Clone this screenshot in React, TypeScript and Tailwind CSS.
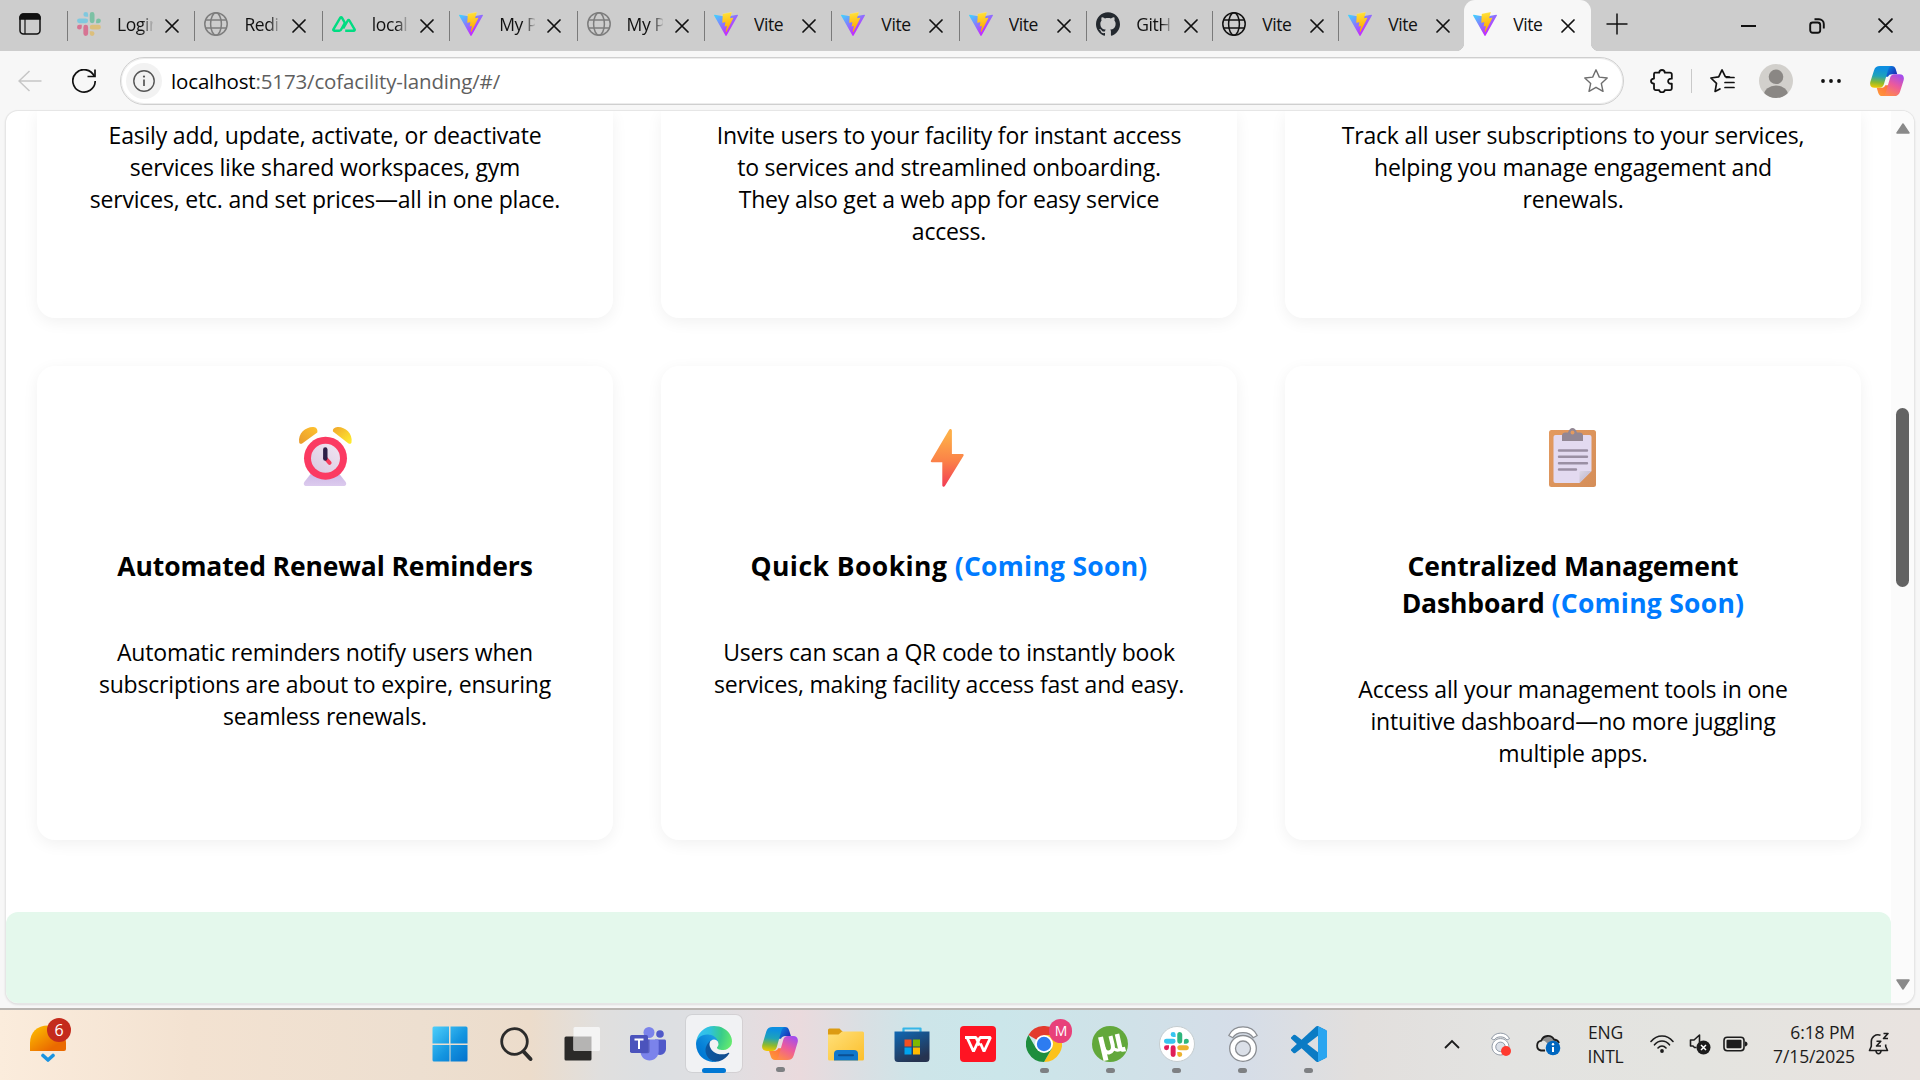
import React, { type ReactNode } from "react";

/* ---------- Favicons and brand marks ---------- */

function ViteMark() {
  return (
    <svg viewBox="0 0 256 257" className="h-6 w-6" preserveAspectRatio="none">
      <defs>
        <linearGradient id="viteA" x1="-.8%" x2="57.6%" y1="7.6%" y2="78.4%">
          <stop offset="0%" stopColor="#41D1FF" />
          <stop offset="100%" stopColor="#BD34FE" />
        </linearGradient>
        <linearGradient id="viteB" x1="43.4%" x2="50.3%" y1="2.2%" y2="89%">
          <stop offset="0%" stopColor="#FFEA83" />
          <stop offset="8.3%" stopColor="#FFDD35" />
          <stop offset="100%" stopColor="#FFA800" />
        </linearGradient>
      </defs>
      <path fill="url(#viteA)" d="M255.153 37.938L134.897 252.976c-2.483 4.44-8.862 4.466-11.382.048L.875 37.958c-2.746-4.814 1.371-10.646 6.827-9.67l120.385 21.517a6.537 6.537 0 0 0 2.322-.004l117.867-21.483c5.438-.991 9.574 4.796 6.877 9.62Z" />
      <path fill="url(#viteB)" d="M185.432.063L96.44 17.501a3.268 3.268 0 0 0-2.634 3.014l-5.474 92.456a3.268 3.268 0 0 0 3.997 3.378l24.777-5.718c2.318-.535 4.413 1.507 3.936 3.838l-7.361 36.047c-.495 2.426 1.782 4.5 4.151 3.78l15.304-4.649c2.372-.72 4.652 1.36 4.15 3.788l-11.698 56.621c-.732 3.542 3.979 5.473 5.943 2.437l1.313-2.028l72.516-144.72c1.215-2.423-.88-5.186-3.54-4.672l-25.505 4.922c-2.396.462-4.435-1.77-3.759-4.114l16.646-57.705c.677-2.35-1.37-4.583-3.769-4.113Z" />
    </svg>
  );
}

function SlackMark({ className }: { className: string }) {
  return (
    <svg viewBox="0 0 54 54" className={className}>
      <path fill="#36C5F0" d="M19.712.133a5.381 5.381 0 0 0-5.376 5.387 5.381 5.381 0 0 0 5.376 5.386h5.376V5.52A5.381 5.381 0 0 0 19.712.133m0 14.365H5.376A5.381 5.381 0 0 0 0 19.884a5.381 5.381 0 0 0 5.376 5.387h14.336a5.381 5.381 0 0 0 5.376-5.387 5.381 5.381 0 0 0-5.376-5.386" />
      <path fill="#2EB67D" d="M53.76 19.884a5.381 5.381 0 0 0-5.376-5.386 5.381 5.381 0 0 0-5.376 5.386v5.387h5.376a5.381 5.381 0 0 0 5.376-5.387m-14.336 0V5.52A5.381 5.381 0 0 0 34.048.133a5.381 5.381 0 0 0-5.376 5.387v14.364a5.381 5.381 0 0 0 5.376 5.387 5.381 5.381 0 0 0 5.376-5.387" />
      <path fill="#ECB22E" d="M34.048 54a5.381 5.381 0 0 0 5.376-5.387 5.381 5.381 0 0 0-5.376-5.386h-5.376v5.386A5.381 5.381 0 0 0 34.048 54m0-14.365h14.336a5.381 5.381 0 0 0 5.376-5.386 5.381 5.381 0 0 0-5.376-5.387H34.048a5.381 5.381 0 0 0-5.376 5.387 5.381 5.381 0 0 0 5.376 5.386" />
      <path fill="#E01E5A" d="M0 34.249a5.381 5.381 0 0 0 5.376 5.386 5.381 5.381 0 0 0 5.376-5.386v-5.387H5.376A5.381 5.381 0 0 0 0 34.25m14.336-.001v14.364A5.381 5.381 0 0 0 19.712 54a5.381 5.381 0 0 0 5.376-5.387V34.25a5.381 5.381 0 0 0-5.376-5.387 5.381 5.381 0 0 0-5.376 5.387" />
    </svg>
  );
}

function GlobeMark({ color }: { color: string }) {
  return (
    <svg viewBox="0 0 24 24" className="h-6 w-6" fill="none" stroke={color} strokeWidth="1.5">
      <circle cx="12" cy="12" r="11.2" />
      <ellipse cx="12" cy="12" rx="5.4" ry="11.2" />
      <path d="M1.8 8h20.4M1.8 16h20.4" />
    </svg>
  );
}

function NuxtMark() {
  return (
    <svg viewBox="0 0 24 24" className="h-6 w-6" fill="none" stroke="#00DC82" strokeWidth="2.4" strokeLinejoin="round">
      <path d="M7.4 18.8H2.2c-.8 0-1.2-.8-.8-1.5L8.3 5.6c.4-.7 1.200-.7 1.600 0l3 5.200-3.200 5.700c-.6 1.500-1.200 2.300-2.300 2.300z" />
      <path d="M13.2 18.8h8.500c.8 0 1.300-.8.9-1.500l-5.200-8.800c-.4-.7-1.200-.7-1.600 0l-4.600 8" />
    </svg>
  );
}

function GithubMark() {
  return (
    <svg viewBox="0 0 24 24" className="h-6 w-6" fill="#24292f">
      <path d="M12 .297c-6.63 0-12 5.373-12 12 0 5.303 3.438 9.8 8.205 11.385.6.113.82-.258.82-.577 0-.285-.01-1.04-.015-2.04-3.338.724-4.042-1.61-4.042-1.61C4.422 18.07 3.633 17.7 3.633 17.7c-1.087-.744.084-.729.084-.729 1.205.084 1.838 1.236 1.838 1.236 1.07 1.835 2.809 1.305 3.495.998.108-.776.417-1.305.76-1.605-2.665-.3-5.466-1.332-5.466-5.93 0-1.31.465-2.38 1.235-3.22-.135-.303-.54-1.523.105-3.176 0 0 1.005-.322 3.3 1.23.96-.267 1.98-.399 3-.405 1.02.006 2.04.138 3 .405 2.28-1.552 3.285-1.23 3.285-1.23.645 1.653.24 2.873.12 3.176.765.84 1.23 1.91 1.23 3.22 0 4.61-2.805 5.625-5.475 5.92.42.36.81 1.096.81 2.22 0 1.606-.015 2.896-.015 3.286 0 .315.21.69.825.57C20.565 22.092 24 17.592 24 12.297c0-6.627-5.373-12-12-12" />
    </svg>
  );
}

function CopilotMark({ className }: { className: string }) {
  return (
    <svg viewBox="0 0 36 32" className={className} preserveAspectRatio="none">
      <defs>
        <linearGradient id="cpA" x1="0.3" y1="0" x2="0.2" y2="1">
          <stop offset="0.1" stopColor="#0d8fe0" />
          <stop offset="0.45" stopColor="#1fa3b8" />
          <stop offset="0.75" stopColor="#8cb92f" />
          <stop offset="1" stopColor="#f5c800" />
        </linearGradient>
        <linearGradient id="cpB" x1="0.8" y1="0" x2="0.3" y2="1">
          <stop offset="0" stopColor="#a14cf0" />
          <stop offset="0.5" stopColor="#ec5a9c" />
          <stop offset="1" stopColor="#ff8a4a" />
        </linearGradient>
        <linearGradient id="cpC" x1="0" y1="0" x2="1" y2="0.600">
          <stop offset="0.3" stopColor="#0a7fe0" />
          <stop offset="1" stopColor="#1a2fb5" />
        </linearGradient>
        <linearGradient id="cpD" x1="1" y1="0" x2="0" y2="1">
          <stop offset="0" stopColor="#ff6a3c" />
          <stop offset="1" stopColor="#ff9c3a" />
        </linearGradient>
      </defs>
      <path fill="url(#cpC)" d="M14 0h9c2.300 0 3.500 1.100 4.200 3.300l1.700 5.500h-5.400c-2.200 0-3.600.8-4.500 2.700H14z" />
      <path fill="url(#cpD)" d="M22 32h-9c-2.300 0-3.500-1.100-4.200-3.300l-1.700-5.500h4.600c2.200 0 3.600-.8 4.500-2.700H22z" />
      <path fill="url(#cpA)" d="M10.500 0H23c-2 .2-3 1.500-3.700 3.800l-4.500 15.500c-.7 2.500-2.200 3.900-4.700 3.900H4.800C1 23.200-.6 20.500.4 16.900L4.300 4.400C5.200 1.400 7.300 0 10.500 0z" />
      <path fill="url(#cpB)" d="M25.500 32H13c2-.2 3-1.500 3.700-3.800l4.500-15.500c.7-2.500 2.200-3.900 4.700-3.900h5.300c3.800 0 5.400 2.700 4.400 6.300l-3.900 12.500c-.9 3-3 4.400-6.200 4.400z" />
    </svg>
  );
}

/* ---------- Browser tabs ---------- */

type TabInfo = { icon: ReactNode; title: string; cut?: boolean };

const tabs: TabInfo[] = [
  { icon: <SlackMark className="h-6 w-6 opacity-50" />, title: "Login", cut: true },
  { icon: <GlobeMark color="#7d7d7d" />, title: "Redir", cut: true },
  { icon: <NuxtMark />, title: "localh", cut: true },
  { icon: <ViteMark />, title: "My Pr", cut: true },
  { icon: <GlobeMark color="#7d7d7d" />, title: "My Pr", cut: true },
  { icon: <ViteMark />, title: "Vite" },
  { icon: <ViteMark />, title: "Vite" },
  { icon: <ViteMark />, title: "Vite" },
  { icon: <GithubMark />, title: "GitHu", cut: true },
  { icon: <GlobeMark color="#111" />, title: "Vite" },
  { icon: <ViteMark />, title: "Vite" },
];

function Cross({ className }: { className: string }) {
  return (
    <svg viewBox="0 0 14 14" className={className} stroke="#111" strokeWidth="1.7" strokeLinecap="round">
      <path d="M1 1l12 12M13 1L1 13" />
    </svg>
  );
}

function TabBody({ icon, title, cut }: TabInfo) {
  return (
    <>
      {icon}
      <span
        className={
          "ml-4 block w-[36px] overflow-hidden whitespace-nowrap text-[17.5px] leading-6 tracking-[-0.4px] text-[#111]" +
          (cut ? " [mask-image:linear-gradient(to_right,#000_25px,transparent_37px)]" : "")
        }
      >
        {title}
      </span>
      <Cross className="ml-3 mt-[3px] h-[14px] w-[14px]" />
    </>
  );
}

function TabStrip() {
  return (
    <div className="flex h-[51px] shrink-0 bg-[#cdcdcd]">
      <div className="flex w-[67px] items-center pb-[3px] pl-[19px]">
        <svg viewBox="0 0 22 22" className="h-[22px] w-[22px]" fill="none" stroke="#111" strokeWidth="1.5">
          <rect x="1" y="1" width="20" height="20" rx="3.5" />
          <path d="M1 4.500a3.500 3.500 0 0 1 3.500-3.500h13a3.500 3.500 0 0 1 3.500 3.500V6H1z" fill="#111" />
          <path d="M6 6v15" strokeWidth="1.2" />
        </svg>
      </div>
      {tabs.map((tab, i) => (
        <div key={i} className={"flex shrink-0 items-center pb-[3px] " + (i < 8 ? "w-[127.4px]" : "w-[126px]")}>
          <div className="mr-[9px] mt-[4px] h-[30px] w-px bg-[#7a7a7a]" />
          <TabBody {...tab} />
        </div>
      ))}
      <div className="-ml-2 flex items-end">
        <div className="h-2 w-2 bg-[radial-gradient(circle_at_0_0,#cdcdcd_8px,#f7f7f7_8.500px)]" />
        <div className="flex h-[51px] w-[127px] items-center rounded-t-[11px] bg-[#f7f7f7] pb-[3px] pl-[9px]">
          <TabBody icon={<ViteMark />} title="Vite" />
        </div>
        <div className="h-2 w-2 bg-[radial-gradient(circle_at_100%_0,#cdcdcd_8px,#f7f7f7_8.500px)]" />
      </div>
      <div className="flex flex-1 items-center pb-1 pl-[7px]">
        <svg viewBox="0 0 22 22" className="h-[22px] w-[22px]" stroke="#111" strokeWidth="1.5">
          <path d="M11 .5v21M.5 11h21" />
        </svg>
      </div>
      <div className="flex items-center gap-[53px] pr-[27px]">
        <div className="h-[2px] w-[15px] bg-[#111]" />
        <svg viewBox="0 0 16 16" className="h-4 w-4" fill="none" stroke="#111" strokeWidth="1.9">
          <rect x="1.200" y="4.500" width="10" height="10.300" rx="2.500" />
          <path d="M5.500 1.200H10a4.800 4.800 0 0 1 4.800 4.800v4.500" />
        </svg>
        <Cross className="h-[15px] w-[15px]" />
      </div>
    </div>
  );
}

/* ---------- Address row ---------- */

function AddressRow() {
  return (
    <div className="flex h-[60px] shrink-0 items-center bg-[#f7f7f7] pl-[18px]">
      <svg viewBox="0 0 24 22" className="h-[22px] w-6" fill="none" stroke="#c6c6c6" strokeWidth="1.5">
        <path d="M23.500 11H1M11.500 1L1 11l10.500 10" />
      </svg>
      <svg viewBox="0 0 24 24" className="ml-[30px] h-6 w-6" fill="none" stroke="#111" strokeWidth="1.7">
        <path d="M22.200 7.200A11.200 11.200 0 1 0 23.200 12" />
        <path d="M23 .5v7h-7.500" />
      </svg>
      <div className="ml-6 flex h-[48px] w-[1504px] items-center rounded-full border border-[#cfcfcf] bg-white pl-[5px] pr-[15px] shadow-[inset_0_0_0_1px_#ececec]">
        <div className="flex h-9 w-9 items-center justify-center rounded-full bg-[#f2f2f2]">
          <svg viewBox="0 0 22 22" className="h-[22px] w-[22px]" fill="none" stroke="#555" strokeWidth="1.400">
            <circle cx="11" cy="11" r="10.200" />
            <path d="M11 9.500v6.500" strokeWidth="1.700" />
            <circle cx="11" cy="6.600" r="1.100" fill="#555" stroke="none" />
          </svg>
        </div>
        <span className="ml-[9px] flex-1 text-[20.5px] leading-7 tracking-[-0.15px] text-[#5f5f5f]">
          <span className="text-black">localhost</span>:5173/cofacility-landing/#/
        </span>
        <svg viewBox="0 0 24 24" className="h-6 w-6" fill="none" stroke="#6e6e6e" strokeWidth="1.400" strokeLinejoin="round">
          <path d="M12 .8l3.300 7.300 7.900.9-5.900 5.400 1.700 7.900L12 18.300 5 22.300l1.700-7.900L.8 9l7.900-.9z" />
        </svg>
      </div>
      <svg viewBox="0 0 24 24" className="ml-[26px] h-6 w-6" fill="none" stroke="#111" strokeWidth="1.800" strokeLinejoin="round">
        <path d="M5 3.700h4.200C9.300 1.900 10.600 1 12 1s2.700.9 2.800 2.700H20a1.800 1.800 0 0 1 1.800 1.800v4.200c-2.300-.3-3.700.9-3.700 2.500s1.400 2.800 3.700 2.500v4.600a1.800 1.800 0 0 1-1.800 1.800h-5.200C14.700 22.500 13.400 23.300 12 23.300s-2.700-.8-2.800-2.200H5.800A1.800 1.800 0 0 1 4 19.300v-4.600C2.200 14.600 1 13.500 1 12.100S2.200 9.700 4 9.600V5a1.300 1.300 0 0 1 1-1.300z" />
      </svg>
      <div className="ml-[17px] h-6 w-px bg-[#c9c9c9]" />
      <svg viewBox="0 0 25 24" className="ml-[18px] h-6 w-[25px]" fill="none" stroke="#111" strokeWidth="1.700" strokeLinejoin="round" strokeLinecap="round">
        <path d="M19.500 8.200L15.300 7.700 12 .9 8.700 7.900.9 9l5.600 5.400-1.400 8 4.800-2.500" />
        <path d="M16.500 8.500H24M15 13.500h9M15 18.500h9" />
      </svg>
      <svg viewBox="0 0 34 34" className="ml-[24px] h-[34px] w-[34px]">
        <clipPath id="avatarClip"><circle cx="17" cy="17" r="17" /></clipPath>
        <circle cx="17" cy="17" r="17" fill="#d2d0cc" />
        <circle cx="17" cy="12.800" r="7.300" fill="#8a8784" />
        <ellipse cx="17" cy="31" rx="12" ry="9.500" fill="#8a8784" clipPath="url(#avatarClip)" />
      </svg>
      <svg viewBox="0 0 22 6" className="ml-[27px] h-[6px] w-[22px]" fill="#111">
        <circle cx="3" cy="3" r="1.900" />
        <circle cx="11" cy="3" r="1.900" />
        <circle cx="19" cy="3" r="1.900" />
      </svg>
      <CopilotMark className="ml-[28px] h-[30px] w-[34px]" />
    </div>
  );
}

/* ---------- Feature cards ---------- */

function AlarmClock() {
  return (
    <svg viewBox="0 0 64 64" className="h-16 w-16">
      <defs>
        <linearGradient id="bellL" x1="0" y1="1" x2="1" y2="0">
          <stop offset="0" stopColor="#e89a2e" />
          <stop offset="1" stopColor="#ffc32e" />
        </linearGradient>
        <linearGradient id="bellR" x1="0" y1="0" x2="1" y2="1">
          <stop offset="0" stopColor="#f0a52c" />
          <stop offset="1" stopColor="#fff02e" />
        </linearGradient>
        <linearGradient id="clockBase" x1="0" y1="0" x2="0" y2="1">
          <stop offset="0" stopColor="#cdb8e6" />
          <stop offset="1" stopColor="#dccbee" />
        </linearGradient>
        <linearGradient id="clockFace" x1="1" y1="0" x2="0.2" y2="1">
          <stop offset="0" stopColor="#f0e6f2" />
          <stop offset="1" stopColor="#dccbe2" />
        </linearGradient>
      </defs>
      <path fill="url(#clockBase)" d="M18 48.500h28l6.500 8.200c1.500 2 .5 4.300-2 4.300h-37c-2.500 0-3.500-2.300-2-4.300z" />
      <circle cx="32.500" cy="33.200" r="21.500" fill="#fb3a62" />
      <circle cx="32.500" cy="33.200" r="14.500" fill="url(#clockFace)" />
      <path d="M32.300 33l4.300 4.800" stroke="#f83c5c" strokeWidth="4" strokeLinecap="round" />
      <path d="M32.300 24.500v9" stroke="#2e1f47" strokeWidth="4.400" strokeLinecap="round" />
      <path fill="url(#bellL)" d="M6.200 17.500C4.700 8 13.200 1.500 20.500 2c2.800.3 4.500 2.500 3.800 5.500L9.500 18.200c-1.300 1-3 .8-3.300-.7z" />
      <path fill="url(#bellR)" d="M58.500 17.500C60 8 51.500 1.500 44.500 2c-3 .3-5.200 2-4.500 4.500l15.200 11.700c1.300 1 3 .8 3.300-.7z" />
    </svg>
  );
}

function Bolt() {
  return (
    <svg viewBox="0 0 64 64" className="h-16 w-16">
      <defs>
        <linearGradient id="boltFill" x1="0.4" y1="0" x2="0.4" y2="1">
          <stop offset="0.1" stopColor="#fdae48" />
          <stop offset="0.55" stopColor="#fb8248" />
          <stop offset="1" stopColor="#f23c55" />
        </linearGradient>
      </defs>
      <path fill="url(#boltFill)" d="M32 5c.9-1.500 2.900-1 2.900.8V29h10.700c1 0 1.400.9.9 1.700L27.900 61c-.8 1.300-2.600.9-2.600-.7V37.200H14.900c-1 0-1.400-.8-.9-1.700z" />
    </svg>
  );
}

function Clipboard() {
  return (
    <svg viewBox="0 0 64 64" className="h-16 w-16">
      <defs>
        <linearGradient id="boardFill" x1="0" y1="0" x2="1" y2="1">
          <stop offset="0" stopColor="#e39a5f" />
          <stop offset="1" stopColor="#d58e59" />
        </linearGradient>
        <linearGradient id="foldFill" x1="0" y1="0" x2="1" y2="1">
          <stop offset="0" stopColor="#dcd7e6" />
          <stop offset="1" stopColor="#b5adc4" />
        </linearGradient>
      </defs>
      <rect x="8" y="5" width="47" height="57" rx="2.500" fill="url(#boardFill)" />
      <path fill="#e3daf0" d="M14.500 10h34a2 2 0 0 1 2 2v34L38.500 58h-24a2 2 0 0 1-2-2V12a2 2 0 0 1 2-2z" />
      <path fill="url(#foldFill)" d="M50.500 46l-12 12V47.500c0-.9.600-1.500 1.500-1.500z" />
      <path fill="#928794" d="M21 16V10.500c0-2 1.500-3 3.500-3H27C28 4.500 29.500 3 31.500 3s3.500 1.500 4.500 4.500h2.500c2 0 3.500 1 3.500 3V16z" />
      <circle cx="31.500" cy="7.500" r="1.900" fill="#e39a5f" />
      <path stroke="#9a8fa3" strokeWidth="2.400" strokeLinecap="round" d="M18 25.500h28M18 31.700h28M18 38.200h28M18 44.500h17" />
    </svg>
  );
}

function Lines({ lines }: { lines: string[] }) {
  return (
    <p className="text-[23px] leading-8 tracking-[-0.19px] text-black">
      {lines.map((l) => (
        <span key={l} className="block whitespace-nowrap">{l}</span>
      ))}
    </p>
  );
}

const cardClass = "flex flex-col items-center bg-white text-center shadow-[0_4px_16px_rgba(0,0,0,0.06)]";

const topCards: string[][] = [
  ["Easily add, update, activate, or deactivate", "services like shared workspaces, gym", "services, etc. and set prices—all in one place."],
  ["Invite users to your facility for instant access", "to services and streamlined onboarding.", "They also get a web app for easy service", "access."],
  ["Track all user subscriptions to your services,", "helping you manage engagement and", "renewals."],
];

const soon = <span className="tracking-[0.26px] text-[#007bff]">(Coming Soon)</span>;

const bottomCards: { icon: ReactNode; title: ReactNode; lines: string[] }[] = [
  {
    icon: <AlarmClock />,
    title: "Automated Renewal Reminders",
    lines: ["Automatic reminders notify users when", "subscriptions are about to expire, ensuring", "seamless renewals."],
  },
  {
    icon: <Bolt />,
    title: <><span className="tracking-[0.45px]">Quick Booking </span>{soon}</>,
    lines: ["Users can scan a QR code to instantly book", "services, making facility access fast and easy."],
  },
  {
    icon: <Clipboard />,
    title: <>Centralized Management<br />Dashboard {soon}</>,
    lines: ["Access all your management tools in one", "intuitive dashboard—no more juggling", "multiple apps."],
  },
];

function PageView() {
  return (
    <div className="mx-[6px] flex h-[892px] shrink-0 overflow-hidden rounded-xl bg-white shadow-[0_0_0_1px_#e6e6e6,0_1px_3px_rgba(0,0,0,0.2)]">
      <div className="flex w-[1885px] shrink-0 flex-col">
        <div className="grid grid-cols-3 gap-x-12 pl-[31px] pr-[30px]">
          {topCards.map((lines) => (
            <div key={lines[0]} className={cardClass + " h-[207px] rounded-b-[18px] pt-2"}>
              <Lines lines={lines} />
            </div>
          ))}
        </div>
        <div className="mt-12 grid grid-cols-3 gap-x-12 pl-[31px] pr-[30px]">
          {bottomCards.map((c) => (
            <div key={c.lines[0]} className={cardClass + " h-[474px] rounded-[18px] pt-[59px]"}>
              {c.icon}
              <h3 className="mb-[51px] mt-[59px] text-[26.5px] font-bold leading-[37px] tracking-[-0.12px] text-black">{c.title}</h3>
              <Lines lines={c.lines} />
            </div>
          ))}
        </div>
        <div className="mt-[72px] flex-1 rounded-t-xl bg-[#e4f8ec]" />
      </div>
      <div className="flex flex-1 flex-col items-center bg-[#fbfbfb] pb-[13px] pt-3">
        <svg viewBox="0 0 14 11" className="h-[11px] w-[14px]" fill="#8a8a8a" stroke="#8a8a8a" strokeWidth="1.500" strokeLinejoin="round">
          <path d="M7 1L13 10H1z" />
        </svg>
        <div className="mt-[274px] h-[179px] w-[13px] rounded-full bg-[#636363]" />
        <svg viewBox="0 0 14 11" className="mt-auto h-[11px] w-[14px]" fill="#8a8a8a" stroke="#8a8a8a" strokeWidth="1.500" strokeLinejoin="round">
          <path d="M7 10L13 1H1z" />
        </svg>
      </div>
    </div>
  );
}

/* ---------- Taskbar ---------- */

function WindowsIcon() {
  return (
    <svg viewBox="0 0 36 36" className="h-9 w-9">
      <defs>
        <linearGradient id="winFill" x1="0" y1="0" x2="36" y2="36" gradientUnits="userSpaceOnUse">
          <stop offset="0" stopColor="#4fd0fb" />
          <stop offset="0.55" stopColor="#1495e0" />
          <stop offset="1" stopColor="#0370cc" />
        </linearGradient>
      </defs>
      <path fill="url(#winFill)" d="M2 .5h15v17H.500V2A1.500 1.500 0 0 1 2 .5zM18.500.5H34A1.500 1.500 0 0 1 35.500 2v15.500h-17zM.5 19H17.500v16.500H2A1.500 1.500 0 0 1 .5 34zM18.500 19h17v15a1.500 1.500 0 0 1-1.500 1.500H18.500z" />
    </svg>
  );
}

function SearchIcon() {
  return (
    <svg viewBox="0 0 36 36" className="h-9 w-9" fill="none" stroke="#2b2b2b">
      <circle cx="16.500" cy="15.500" r="12.800" strokeWidth="2.800" />
      <path d="M25.500 25.500l7 7.500" strokeWidth="4" strokeLinecap="round" />
    </svg>
  );
}

function TaskViewIcon() {
  return (
    <svg viewBox="0 0 36 36" className="h-9 w-9">
      <rect x="0.500" y="10.500" width="27" height="24" rx="1.500" fill="#2b2a29" />
      <rect x="9.500" y="1" width="26.500" height="24" rx="1.500" fill="#f4f4f4" />
      <path d="M9.500 10.500h18V25H11a1.500 1.500 0 0 1-1.500-1.500z" fill="#b5b4b3" />
    </svg>
  );
}

function TeamsIcon() {
  return (
    <svg viewBox="0 0 36 36" className="h-9 w-9">
      <circle cx="30" cy="8" r="3.800" fill="#5059c9" />
      <path d="M25 13.500h9.500c.8 0 1.500.7 1.500 1.500v8a6 6 0 0 1-6 6c-2 0-4-1-5-2.500z" fill="#5059c9" />
      <circle cx="19" cy="6.500" r="5.500" fill="#7b83eb" />
      <path d="M11 13.500h16c1 0 1.700.7 1.700 1.700V25c0 5.500-4 9.500-9.200 9.500-5 0-9-4-9-9z" fill="#7b83eb" />
      <path d="M11 13.500h8.500v12c0 1-.8 1.700-1.700 1.700h-6.500z" fill="#4a50ac" opacity=".7" />
      <rect x="0" y="9" width="18" height="18" rx="1.700" fill="#4b53bc" />
      <path d="M4.500 13.500h9M9 13.500v9.500" stroke="#fff" strokeWidth="2" />
    </svg>
  );
}

function EdgeIcon() {
  return (
    <svg viewBox="0 0 256 256" className="h-9 w-9">
      <defs>
        <linearGradient id="edA" x1="63" y1="177" x2="241" y2="177" gradientUnits="userSpaceOnUse">
          <stop offset="0" stopColor="#0c59a4" />
          <stop offset="1" stopColor="#114a8b" />
        </linearGradient>
        <linearGradient id="edB" x1="157" y1="100" x2="46" y2="221" gradientUnits="userSpaceOnUse">
          <stop offset="0" stopColor="#1b9de2" />
          <stop offset="0.16" stopColor="#1595df" />
          <stop offset="0.67" stopColor="#0680d7" />
          <stop offset="1" stopColor="#0078d4" />
        </linearGradient>
        <radialGradient id="edC" cx="26" cy="45" r="240" gradientUnits="userSpaceOnUse">
          <stop offset="0" stopColor="#35c1f1" />
          <stop offset="0.3" stopColor="#2fc2df" />
          <stop offset="0.65" stopColor="#38cc8a" />
          <stop offset="1" stopColor="#66eb6e" />
        </radialGradient>
      </defs>
      <path fill="url(#edA)" d="M231 190.500c-3.400 1.800-6.900 3.400-10.500 4.700a101.900 101.900 0 0 1-35.900 6.500c-47.300 0-88.500-32.500-88.500-74.300a31.500 31.500 0 0 1 16.400-27.300c-42.800 1.800-53.800 46.400-53.800 72.500 0 73.900 68.100 81.400 82.800 81.400 7.900 0 19.800-2.300 27-4.600l1.300-.4a128.300 128.300 0 0 0 66.600-52.800 4 4 0 0 0-5.400-5.700z" />
      <path fill="url(#edB)" d="M105.700 241.400a79.200 79.200 0 0 1-22.700-21.300 80.700 80.700 0 0 1 29.500-120c3.200-1.500 8.500-4.100 15.600-4a32.400 32.400 0 0 1 25.700 13 31.900 31.900 0 0 1 6.300 18.700c0-.2 24.500-79.600-80-79.600-43.900 0-80 41.700-80 78.200a130.200 130.200 0 0 0 12.100 56 128 128 0 0 0 156.400 67 75.500 75.500 0 0 1-62.800-8z" />
      <path fill="url(#edC)" d="M152.300 148.900c-.9 1-3.400 2.500-3.400 5.600 0 2.600 1.700 5.200 4.800 7.300 14.300 10 41.400 8.600 41.500 8.600a59.600 59.600 0 0 0 30.300-8.300 61.400 61.400 0 0 0 30.400-52.900c.3-22.400-8-37.300-11.300-43.900C223.500 23.900 177.700 0 128 0A128 128 0 0 0 0 126.200c.5-36.500 36.800-66 80-66 3.500 0 23.500.3 42 10a72.600 72.600 0 0 1 30.900 29.300c6.100 10.600 7.200 24.100 7.200 29.500s-2.700 13.300-7.800 19.900z" />
    </svg>
  );
}

function ExplorerIcon() {
  return (
    <svg viewBox="0 0 36 36" className="h-9 w-9">
      <defs>
        <linearGradient id="folder" x1="0" y1="0" x2="1" y2="1">
          <stop offset="0" stopColor="#ffe07a" />
          <stop offset="1" stopColor="#fcbf2c" />
        </linearGradient>
      </defs>
      <path d="M0 4a1.500 1.500 0 0 1 1.500-1.500h10l3.500 3.500-4 4H0z" fill="#dc9b12" />
      <path d="M0 8.500h10.500L14 5.500h20.500A1.500 1.500 0 0 1 36 7v26a1.500 1.500 0 0 1-1.500 1.500h-33A1.500 1.500 0 0 1 0 33z" fill="url(#folder)" />
      <path d="M6 34.500V28a4 4 0 0 1 4-4h16a4 4 0 0 1 4 4v6.500z" fill="#1278cc" />
      <path d="M11 29.200h14" stroke="#0b4f93" strokeWidth="2" strokeLinecap="round" />
    </svg>
  );
}

function StoreIcon() {
  return (
    <svg viewBox="0 0 36 36" className="h-9 w-9">
      <defs>
        <linearGradient id="bag" x1="0" y1="0" x2="0.500" y2="1">
          <stop offset="0" stopColor="#0f68b4" />
          <stop offset="1" stopColor="#263350" />
        </linearGradient>
      </defs>
      <path d="M9.500 8V2.500h17V8" fill="none" stroke="#35b6e8" strokeWidth="2.200" strokeLinejoin="round" />
      <path d="M.5 5.500h35v27A3.500 3.500 0 0 1 32 36H4a3.500 3.500 0 0 1-3.500-3.500z" fill="url(#bag)" />
      <rect x="10.500" y="13.500" width="7" height="7" fill="#f25022" />
      <rect x="19" y="13.500" width="7" height="7" fill="#7fba00" />
      <rect x="10.500" y="21.500" width="7" height="7" fill="#00a4ef" />
      <rect x="19" y="21.500" width="7" height="7" fill="#ffb900" />
    </svg>
  );
}

function WpsIcon() {
  return (
    <svg viewBox="0 0 36 36" className="h-9 w-9">
      <rect width="36" height="36" rx="4" fill="#ff1423" />
      <path d="M5 11.500h11l3.500 8M7 11.500l6.500 14 6.500-14h10.500l-6.500 14-3.500-8" fill="none" stroke="#fff" strokeWidth="2.800" strokeLinejoin="bevel" />
    </svg>
  );
}

function ChromeIcon() {
  return (
    <svg viewBox="0 0 36 36" className="h-9 w-9">
      <path d="M18 18L2.400 9A18 18 0 0 1 33.600 9z" fill="#e33b2e" />
      <path d="M18 9H33.600A18 18 0 0 1 18 36l7.800-13.500z" fill="#fcc21b" />
      <path d="M2.400 9l7.800 13.500L25.800 22.500 18 36A18 18 0 0 1 2.400 9z" fill="#1e8e3e" />
      <circle cx="18" cy="18" r="9" fill="#fff" />
      <circle cx="18" cy="18" r="7.200" fill="#2d7cf0" />
    </svg>
  );
}

function UtorrentIcon() {
  return (
    <svg viewBox="0 0 36 36" className="h-9 w-9" fill="none">
      <circle cx="18" cy="18" r="18" fill="#62a83b" />
      <path d="M8.500 11l5.500 23.500" stroke="#fff" strokeWidth="5" />
      <path d="M10.500 19c1.500 6.500 4 8 6.500 7.500 3-.7 4.500-3.500 3.700-7.500L18.500 10" stroke="#fff" strokeWidth="4" />
      <path d="M25 8l3 13.500c.5 2 2.500 2.300 5.500 1.500" stroke="#fff" strokeWidth="4.500" />
      <path d="M20.500 20.500c1.500 3.500 4 4.500 8 3" stroke="#fff" strokeWidth="3" />
    </svg>
  );
}

function SlackTaskIcon() {
  return (
    <div className="flex h-9 w-9 items-center justify-center rounded-full border border-[#c5cdd0] bg-white">
      <SlackMark className="h-[25px] w-[25px]" />
    </div>
  );
}

function VpnIcon({ tone, className }: { tone: string; className: string }) {
  return (
    <svg viewBox="0 0 30 36" className={className} fill="#fff" stroke={tone} strokeWidth="1.300">
      <path d="M.8 9.500C6-2 24-2 29.200 9.500l-4 2.200C21 5 9 5 4.800 11.700z" strokeLinejoin="round" />
      <path d="M15 9.500c7.500 0 13.300 5.700 13.300 13S22.500 35.300 15 35.300 1.700 29.800 1.700 22.500 7.500 9.500 15 9.500z" />
      <circle cx="15" cy="22.500" r="7.500" fill="#dbe0e8" />
    </svg>
  );
}

function VscodeIcon() {
  return (
    <svg viewBox="0 0 24 24" className="h-9 w-9">
      <path fill="#0b7bc4" d="M23.150 2.587L18.210.21a1.494 1.494 0 0 0-1.705.29l-9.460 8.630-4.120-3.128a.999.999 0 0 0-1.276.057L.327 7.261A1 1 0 0 0 .326 8.740L3.899 12 .326 15.260a1 1 0 0 0 .001 1.479L1.650 17.940a.999.999 0 0 0 1.276.057l4.120-3.128 9.460 8.630a1.492 1.492 0 0 0 1.704.29l4.942-2.377A1.500 1.500 0 0 0 24 20.060V3.939a1.500 1.500 0 0 0-.85-1.352zm-5.146 14.861L10.826 12l7.178-5.448v10.896z" />
      <path fill="#2aa5f0" d="M18 .15l5.150 2.437A1.500 1.500 0 0 1 24 3.940v16.120a1.500 1.500 0 0 1-.85 1.352L18 23.850z" />
    </svg>
  );
}

type TaskItem = { icon: ReactNode; active?: boolean; running?: boolean; badge?: string };

const taskItems: TaskItem[] = [
  { icon: <WindowsIcon /> },
  { icon: <SearchIcon /> },
  { icon: <TaskViewIcon /> },
  { icon: <TeamsIcon /> },
  { icon: <EdgeIcon />, active: true },
  { icon: <CopilotMark className="h-[33px] w-9" />, running: true },
  { icon: <ExplorerIcon /> },
  { icon: <StoreIcon /> },
  { icon: <WpsIcon /> },
  { icon: <ChromeIcon />, running: true, badge: "M" },
  { icon: <UtorrentIcon />, running: true },
  { icon: <SlackTaskIcon />, running: true },
  { icon: <VpnIcon tone="#8a8d92" className="h-9 w-[30px]" />, running: true },
  { icon: <VscodeIcon />, running: true },
];

function Taskbar() {
  return (
    <div className="flex h-[72px] shrink-0 items-start border-t-2 border-[#b9b5b1] bg-[linear-gradient(90deg,#fbecdc_0px,#f3e2d1_190px,#eddfd0_420px,#ecdccb_530px,#e0dfde_600px,#dcdfe2_650px,#dfdfe2_720px,#eadadd_800px,#dadfe3_860px,#cde5e9_920px,#cbe6ea_1000px,#cfe2e8_1110px,#d5dde8_1240px,#e2dfdd_1360px,#e3e3e1_1500px,#e4e4e0_1700px,#e9e3e0_1920px)]">
      <div className="flex w-[417px] pl-[29px] pt-[14px]">
        <div className="relative">
          <svg viewBox="0 0 38 38" className="h-[38px] w-[38px]" fill="none">
            <defs>
              <linearGradient id="alertBell" x1="0" y1="0" x2="1" y2="1">
                <stop offset="0" stopColor="#ffc400" />
                <stop offset="0.75" stopColor="#ea6a00" />
              </linearGradient>
            </defs>
            <path d="M1 27V19C1 8.500 8 1.500 19 1.500S37 8.500 37 19v6a2 2 0 0 1-2 2z" fill="url(#alertBell)" />
            <path d="M14 31.500l5 4.500 5-4.500" stroke="#1a93e0" strokeWidth="3.600" strokeLinecap="round" strokeLinejoin="round" />
          </svg>
          <div className="absolute -top-[6px] left-[18px] flex h-6 w-6 items-center justify-center rounded-full bg-[#c42b1c] text-[16px] leading-none text-white">6</div>
        </div>
      </div>
      {taskItems.map((t, i) => (
        <div key={i} className="flex w-[66.05px] shrink-0 justify-center pt-[5px]">
          <div
            className={
              "relative flex h-[57px] w-14 flex-col items-center pt-[11px] " +
              (t.active ? "rounded-md bg-[#f1f2f4] shadow-[0_0_0_1px_rgba(0,0,0,0.06)]" : "")
            }
          >
            <div className="flex h-9 items-center">{t.icon}</div>
            {t.active && <div className="mt-[6px] h-[5px] w-6 shrink-0 rounded-full bg-[#0078d4]" />}
            {t.running && <div className="mt-[6px] h-[5px] w-[9px] shrink-0 rounded-full bg-[#7e8083]" />}
            {t.badge && (
              <div className="absolute right-0 top-1 flex h-6 w-[23px] items-center justify-center rounded-full bg-[#e8417a] text-[14px] leading-none text-white">{t.badge}</div>
            )}
          </div>
        </div>
      ))}
      <div className="ml-auto flex h-[58px] items-center pr-[30px] pt-[10px] text-[17.5px] leading-6 tracking-[-0.1px] text-[#1c1c1c]">
        <svg viewBox="0 0 16 10" className="mr-[31px] h-[10px] w-4" fill="none" stroke="#1c1c1c" strokeWidth="1.800">
          <path d="M1 9l7-7 7 7" />
        </svg>
        <div className="relative mr-[25px]">
          <VpnIcon tone="#7d8796" className="h-6 w-[19px]" />
          <div className="absolute -right-[1px] bottom-0 h-[10px] w-[10px] rounded-full bg-[#ff3b30]" />
        </div>
        <svg viewBox="0 0 26 24" className="mr-[26px] h-6 w-[26px]">
          <path d="M6 18.500a5 5 0 0 1 .3-9.800A7 7 0 0 1 19 7.500c3 .2 5 2.500 5 5.500l-9 5z" fill="#8f8f8f" />
          <path d="M6.300 8.700c4-1 6 3 8 5v4.800H6a5 5 0 0 1 .3-9.800z" fill="#e4e4e1" />
          <path d="M10 18.500H6a5 5 0 0 1 .3-9.800A7 7 0 0 1 19 7.500c2.500.2 4.300 1.500 5 3.500" fill="none" stroke="#1c1c1c" strokeWidth="1.800" />
          <circle cx="18" cy="16" r="7.300" fill="#0067c0" />
          <path d="M18 15v5" stroke="#fff" strokeWidth="2" />
          <circle cx="18" cy="12.200" r="1.200" fill="#fff" />
        </svg>
        <div className="mr-[26px] w-[37px] text-center tracking-[-0.2px]">
          <div>ENG</div>
          <div>INTL</div>
        </div>
        <svg viewBox="0 0 24 18" className="mr-[15px] h-[18px] w-6" fill="none" stroke="#1c1c1c" strokeWidth="1.600" strokeLinecap="round">
          <path d="M1 6.500C7-.8 17-.8 23 6.500M4.500 9.800c4.300-5 10.700-5 15 0M8 13c2.300-2.700 5.700-2.700 8 0" />
          <circle cx="12" cy="16" r="1.900" fill="#1c1c1c" stroke="none" />
        </svg>
        <svg viewBox="0 0 22 22" className="mr-[12px] h-[22px] w-[22px]" fill="none">
          <path d="M7.500 14.500H5.500L4 13H1.500V7H5l5.500-5v7" stroke="#1c1c1c" strokeWidth="1.600" strokeLinejoin="round" />
          <circle cx="14.500" cy="14.500" r="7" fill="#1c1c1c" />
          <path d="M12 12l5 5M17 12l-5 5" stroke="#fff" strokeWidth="1.500" />
        </svg>
        <svg viewBox="0 0 25 16" className="mr-[23px] h-4 w-[25px]">
          <rect x="1" y="1.200" width="20" height="13.500" rx="3.200" fill="none" stroke="#1c1c1c" strokeWidth="1.600" />
          <rect x="3.500" y="3.700" width="15" height="8.500" rx="1" fill="#1c1c1c" />
          <path d="M22 5.500c1.500.3 2.500 1.200 2.500 2.500s-1 2.200-2.500 2.500z" fill="#1c1c1c" />
        </svg>
        <div className="mr-[13px] w-[84px] whitespace-nowrap text-right">
          <div>6:18 PM</div>
          <div>7/15/2025</div>
        </div>
        <svg viewBox="0 0 22 24" className="h-6 w-[22px]" fill="none" stroke="#1c1c1c" strokeWidth="1.600" strokeLinejoin="round">
          <path d="M12.500 3.200C7.500 1.500 3.300 5 3.300 9.500v4.800L1.500 18.500h18l-1.800-4v-2" />
          <path d="M8 19c.3 2 1.300 2.800 2.500 2.800S12.700 21 13 19" />
          <path d="M8.500 9.200h4.300l-4.300 4.800h4.500M15.500 1.500h4.500l-4.500 5H20" />
        </svg>
      </div>
    </div>
  );
}

export default function App() {
  return (
    <div className="flex h-[1080px] w-[1920px] flex-col overflow-hidden bg-[#f7f7f7] font-['Open_Sans','Noto_Sans',sans-serif]">
      <TabStrip />
      <AddressRow />
      <PageView />
      <div className="h-[5px] shrink-0" />
      <Taskbar />
    </div>
  );
}
